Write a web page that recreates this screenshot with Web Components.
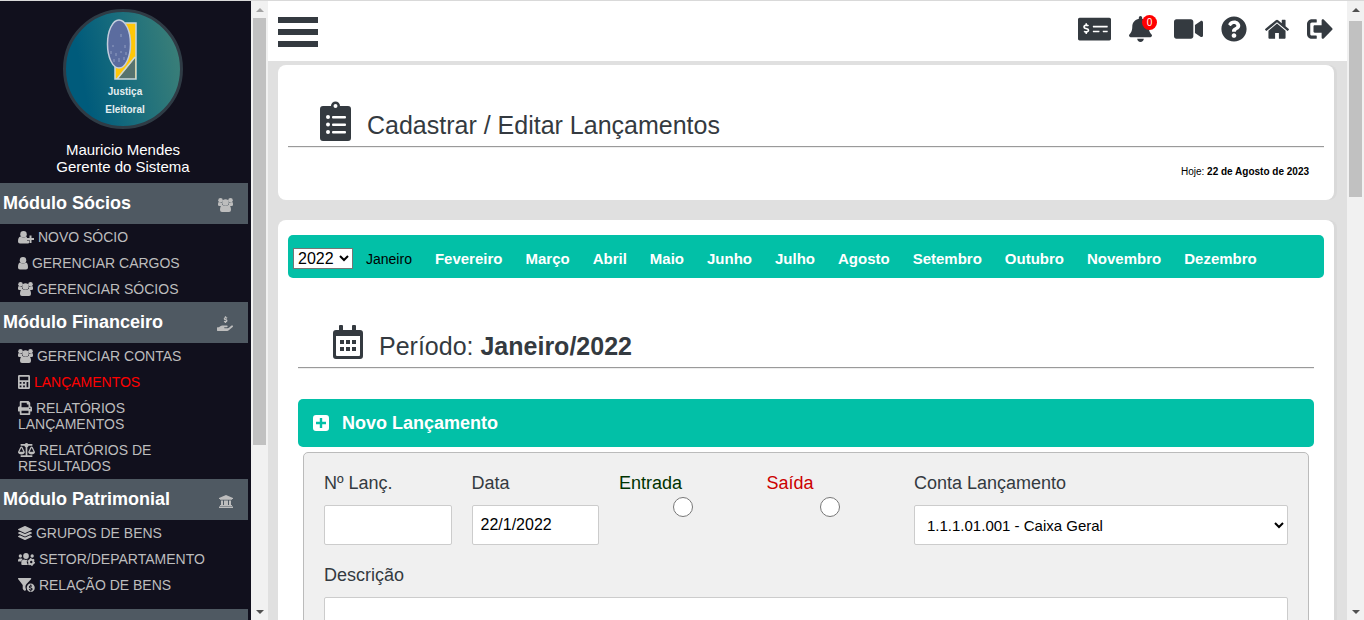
<!DOCTYPE html>
<html lang="pt-BR">
<head>
<meta charset="utf-8">
<meta name="viewport" content="width=device-width, initial-scale=1">
<title>Cadastrar / Editar Lançamentos</title>
<style>
    html, body {
        height: 100%;
        margin: 0;
    }

    body {
        font-family: "Liberation Sans", Arial, sans-serif;
        color: #343a40;
    }
</style>
</head>
<body>
<app-shell>
    <side-bar slot="side">
        <user-profile name="Mauricio Mendes" role-name="Gerente do Sistema"></user-profile>
        <side-module heading="Módulo Sócios" icon="users">
            <side-item icon="user-plus">NOVO SÓCIO</side-item>
            <side-item icon="user">GERENCIAR CARGOS</side-item>
            <side-item icon="users">GERENCIAR SÓCIOS</side-item>
        </side-module>
        <side-module heading="Módulo Financeiro" icon="hand-dollar">
            <side-item icon="users">GERENCIAR CONTAS</side-item>
            <side-item icon="calculator" active>LANÇAMENTOS</side-item>
            <side-item icon="print">RELATÓRIOS LANÇAMENTOS</side-item>
            <side-item icon="balance">RELATÓRIOS DE RESULTADOS</side-item>
        </side-module>
        <side-module heading="Módulo Patrimonial" icon="bank">
            <side-item icon="layers">GRUPOS DE BENS</side-item>
            <side-item icon="users-cog">SETOR/DEPARTAMENTO</side-item>
            <side-item icon="funnel">RELAÇÃO DE BENS</side-item>
        </side-module>
        <side-module class="last" heading=""></side-module>
    </side-bar>

    <top-bar slot="top"></top-bar>

    <content-card>
        <page-title icon="clipboard">Cadastrar / Editar Lançamentos</page-title>
        <today-date date="22 de Agosto de 2023"></today-date>
    </content-card>

    <content-card class="grow">
        <month-bar year="2022" current="Janeiro"></month-bar>
        <period-panel>
            <page-title slot="title" level="2" icon="calendar">Período: <b>Janeiro/2022</b></page-title>
            <entry-form date="22/1/2022"></entry-form>
        </period-panel>
    </content-card>
</app-shell>

<script>
// each icon: [viewBox, width, height, markup]
const ICONS = {
    'users': ['0 0 30 28', 15, 14, `
        <circle cx="5" cy="4.500" r="4.500"/><circle cx="25" cy="4.500" r="4.500"/>
        <path d="M0 15v-3q0-4 2-4 3 2 6 1.500q-.5 5 2.500 6.500H3q-3 0-3-2zM30 15v-3q0-4-2-4-3 2-6 1.500.5 5-2.500 6.500H27q3 0 3-2z"/>
        <circle cx="15" cy="9" r="6.500"/>
        <path d="M4 24q0-9 5-10 6 4 12 0 5 1 5 10 0 4-4 4H8q-4 0-4-4z"/>`],
    'user': ['0 0 20 28', 10, 14, `
        <circle cx="10" cy="8.500" r="6.500"/>
        <path d="M0 23q0-9 4-10 6 4 12 0 4 1 4 10 0 4-4 4H4q-4 0-4-4z"/>`],
    'user-plus': ['0 0 32 28', 16, 14, `
        <circle cx="11" cy="8.500" r="6.500"/>
        <path d="M0 23q0-9 5-10 6 4 12 0l1 2.500V21h4v5q-1 1-4 1H4q-4 0-4-4z"/>
        <path d="M23 11h4v5h5v4h-5v6h-4v-6h-5v-4h5z"/>`],
    'calculator': ['0 0 448 512', 12, 14, `
        <path fill-rule="evenodd" d="M48 0h352q48 0 48 48v416q0 48-48 48H48q-48 0-48-48V48Q0 0 48 0zM64 64v128h320V64zM64 256v64h64v-64zM192 256v64h64v-64zM320 256v192h64V256zM64 384v64h64v-64zM192 384v64h64v-64z"/>`],
    'print': ['0 0 512 512', 14, 14, `
        <path d="M448 192V77.250c0-8.490-3.370-16.620-9.370-22.630L393.370 9.370c-6-6-14.140-9.370-22.630-9.370H96C78.330 0 64 14.330 64 32v160c-35.350 0-64 28.650-64 64v112c0 8.840 7.160 16 16 16h48v96c0 17.670 14.330 32 32 32h320c17.670 0 32-14.330 32-32v-96h48c8.840 0 16-7.160 16-16V256c0-35.350-28.650-64-64-64zm-64 256H128v-96h256v96zm0-224H128V64h192v48c0 8.840 7.160 16 16 16h48v96zm48 72c-13.250 0-24-10.750-24-24 0-13.260 10.750-24 24-24s24 10.740 24 24c0 13.250-10.750 24-24 24z"/>`],
    'balance': ['0 0 640 512', 17, 14, `
        <path d="M256 336h-.02c0-16.180 1.340-8.730-85.050-181.510-17.650-35.290-68.190-35.360-85.870 0C-2.060 328.750.02 320.330.02 336H0c0 44.180 57.310 80 128 80s128-35.820 128-80zM128 176l72 144H56l72-144zm511.980 160c0-16.180 1.340-8.730-85.050-181.510-17.650-35.290-68.190-35.360-85.870 0-87.120 174.260-85.040 165.840-85.040 181.510H384c0 44.180 57.310 80 128 80s128-35.820 128-80h-.02zM440 320l72-144 72 144H440zm88 128H352V153.250c23.510-10.290 41.160-31.480 46.390-57.250H528c8.840 0 16-7.160 16-16V48c0-8.840-7.160-16-16-16H383.640C369.040 12.680 346.090 0 320 0s-49.040 12.680-63.640 32H112c-8.840 0-16 7.160-16 16v32c0 8.840 7.160 16 16 16h129.610c5.230 25.760 22.870 46.960 46.390 57.250V448H112c-8.840 0-16 7.160-16 16v32c0 8.840 7.160 16 16 16h416c8.840 0 16-7.160 16-16v-32c0-8.840-7.160-16-16-16z"/>`],
    'layers': ['0 0 512 512', 14, 14, `
        <path d="M12.410 148.020l232.940 105.670c6.800 3.090 14.490 3.090 21.290 0l232.940-105.670c16.550-7.510 16.550-32.520 0-40.030L266.650 2.310a25.607 25.607 0 0 0-21.290 0L12.410 107.980c-16.550 7.510-16.550 32.530 0 40.040zm487.180 88.280l-58.090-26.330-161.640 73.270c-7.560 3.430-15.590 5.170-23.860 5.170s-16.290-1.740-23.860-5.170L70.510 209.970l-58.100 26.330c-16.550 7.500-16.550 32.500 0 40l232.940 105.590c6.800 3.080 14.490 3.080 21.290 0L499.590 276.300c16.550-7.500 16.550-32.500 0-40zm0 127.800l-57.870-26.230-161.860 73.370c-7.560 3.430-15.590 5.170-23.860 5.170s-16.290-1.740-23.860-5.170L70.290 337.870 12.410 364.100c-16.550 7.500-16.550 32.500 0 40l232.940 105.590c6.800 3.080 14.490 3.080 21.290 0L499.590 404.100c16.550-7.500 16.550-32.500 0-40z"/>`],
    'users-cog': ['0 0 36 28', 17, 14, `
        <circle cx="5" cy="8" r="3.500"/><circle cx="30" cy="8" r="3.500"/><circle cx="17" cy="8" r="6"/>
        <path d="M0 17q0-4 4-4h3q2 0 3 1-3 2-3 5H0zM7 22q0-7 6-7 4 1.500 7 0-3 5 0 9l1 2H9q-2 0-2-2z"/>
        <circle cx="28" cy="20" r="4.500" fill="none" stroke="currentColor" stroke-width="4"/>
        <circle cx="28" cy="20" r="6.500" fill="none" stroke="currentColor" stroke-width="3" stroke-dasharray="3 3.800"/>`],
    'funnel': ['0 0 36 28', 17, 14, `
        <path d="M1.500 0h25q3 0 1 2.500L18 12q-4 4-1 11l-1 2q-1 1-3 0l-2-2q-1-1-1-2v-7L.5 2.500Q-1 0 1.500 0z"/>
        <path fill-rule="evenodd" d="M27 11a8.500 8.500 0 1 1 0 17 8.500 8.500 0 1 1 0-17zM26 13v2q-3 .5-3 3t5 3.500q1 1.500-1 1.500l-3-1-1 2 3 1v2h2v-2q3-.5 3-3t-5-3.500q-1-1.500 1-1.500l2 .7 1-2-2-.8v-2z"/>`],
    'hand-dollar': ['0 0 576 512', 16, 15, `
        <path d="M565.300 328.100c-11.800-10.700-30.200-10-42.600 0L430.300 402c-11.300 9.100-25.400 14-40 14H272c-8.800 0-16-7.200-16-16s7.200-16 16-16h78.300c15.900 0 30.700-10.900 33.300-26.600 3.300-20-12.100-37.400-31.600-37.400H192c-27 0-53.100 9.300-74.100 26.300L71.400 384H16c-8.800 0-16 7.200-16 16v96c0 8.800 7.200 16 16 16h356.800c14.500 0 28.600-4.900 40-14L564 377c15.200-12.100 16.400-35.300 1.300-48.900z"/>
        <path d="M365 75q-30-18-65-14-42 8-32 40 6 16 39 20 48 7 48 36-2 34-48 36-30 0-53-14M306 10v45M306 198v45" fill="none" stroke="currentColor" stroke-width="46"/>`],
    'bank': ['0 0 28 28', 14, 14, `
        <path d="M14 2l14 6v2h-2v1.500H2V10H0V8zM4 13h4v9h2v-9h4v9h0v-9h4v9h2v-9h4v9h2v2H2v-2h2zM0 25h28v3H0z"/>`],
    'money-check': ['0 0 640 512', 33, 26, `
        <path d="M608 32H32C14.330 32 0 46.330 0 64v384c0 17.670 14.330 32 32 32h576c17.670 0 32-14.330 32-32V64c0-17.670-14.330-32-32-32zM176 327.880V344c0 4.420-3.580 8-8 8h-16c-4.420 0-8-3.580-8-8v-16.290c-11.290-.58-22.270-4.520-31.370-11.350-3.900-2.930-4.100-8.770-.57-12.140l11.750-11.210c2.770-2.640 6.890-2.760 10.130-.73 3.870 2.420 8.260 3.720 12.820 3.720h28.110c6.500 0 11.800-5.920 11.800-13.190 0-5.950-3.610-11.190-8.770-12.730l-45-13.500c-18.590-5.580-31.580-23.420-31.580-43.390 0-24.520 19.050-44.440 42.670-45.070V152c0-4.420 3.580-8 8-8h16c4.420 0 8 3.580 8 8v16.290c11.290.58 22.270 4.510 31.370 11.350 3.900 2.930 4.100 8.770.57 12.140l-11.750 11.210c-2.770 2.640-6.890 2.760-10.130.73-3.870-2.430-8.260-3.720-12.820-3.720h-28.110c-6.500 0-11.800 5.920-11.800 13.190 0 5.950 3.610 11.190 8.770 12.730l45 13.500c18.590 5.580 31.580 23.420 31.580 43.390 0 24.530-19.050 44.440-42.670 45.070zM416 312c0 4.420-3.580 8-8 8H296c-4.420 0-8-3.580-8-8v-16c0-4.420 3.580-8 8-8h112c4.420 0 8 3.580 8 8v16zm160 0c0 4.420-3.580 8-8 8h-80c-4.420 0-8-3.580-8-8v-16c0-4.420 3.580-8 8-8h80c4.420 0 8 3.580 8 8v16zm0-96c0 4.420-3.580 8-8 8H296c-4.420 0-8-3.580-8-8v-16c0-4.420 3.580-8 8-8h272c4.420 0 8 3.580 8 8v16z"/>`],
    'bell': ['0 0 448 512', 23, 26, `
        <path d="M224 512c35.320 0 63.970-28.650 63.970-64H160.030c0 35.350 28.650 64 63.970 64zm215.390-149.710c-19.320-20.760-55.470-51.990-55.470-154.290 0-77.700-54.480-139.900-127.940-155.160V32c0-17.670-14.320-32-31.980-32s-31.980 14.330-31.980 32v20.840C118.560 68.100 64.080 130.300 64.080 208c0 102.300-36.150 133.530-55.470 154.290-6 6.450-8.660 14.160-8.610 21.710.11 16.400 12.980 32 32.100 32h383.800c19.120 0 32-15.600 32.100-32 .05-7.550-2.610-15.270-8.610-21.710z"/>`],
    'video': ['0 0 576 512', 29, 26, `
        <path d="M336.200 64H47.800C21.400 64 0 85.400 0 111.800v288.400C0 426.600 21.400 448 47.800 448h288.400c26.400 0 47.800-21.400 47.800-47.800V111.800c0-26.400-21.400-47.800-47.800-47.800zm189.400 37.700L416 177.300v157.400l109.600 75.500c21.200 14.600 50.400-.3 50.400-25.800V127.500c0-25.400-29.100-40.400-50.400-25.800z"/>`],
    'question': ['0 0 512 512', 26, 26, `
        <path d="M504 256c0 136.997-111.043 248-248 248S8 392.997 8 256C8 119.083 119.043 8 256 8s248 111.083 248 248zM262.655 90c-54.497 0-89.255 22.957-116.549 63.758-3.536 5.286-2.353 12.415 2.715 16.258l34.699 26.310c5.205 3.947 12.621 3.008 16.665-2.122 17.864-22.658 30.113-35.797 57.303-35.797 20.429 0 45.698 13.148 45.698 32.958 0 14.976-12.363 22.667-32.534 33.976C247.128 238.528 216 254.941 216 296v4c0 6.627 5.373 12 12 12h56c6.627 0 12-5.373 12-12v-1.333c0-28.462 83.186-29.647 83.186-106.667 0-58.002-60.165-102-116.531-102zM256 338c-25.365 0-46 20.635-46 46 0 25.364 20.635 46 46 46s46-20.636 46-46c0-25.364-20.635-46-46-46z"/>`],
    'home': ['88 0 1616 1750', 24, 26, `
        <path d="M1472 992v480q0 26-19 45t-45 19h-384v-384h-256v384h-384q-26 0-45-19t-19-45v-480q0-1 .5-3t.5-3l575-474 575 474q1 2 1 6zm223-69l-62 74q-8 9-21 11h-3q-13 0-21-7l-692-577-692 577q-12 8-24 7-13-2-21-11l-62-74q-8-10-7-23.500t11-21.500l719-599q32-26 76-26t76 26l244 204v-195q0-14 9-23t23-9h192q14 0 23 9t9 23v408l219 182q10 8 11 21.500t-7 23.500z"/>`],
    'sign-out': ['0 0 512 512', 26, 26, `
        <path d="M497 273L329 441c-15 15-41 4.500-41-17v-96H152c-13.300 0-24-10.700-24-24v-96c0-13.300 10.700-24 24-24h136V88c0-21.400 25.900-32 41-17l168 168c9.300 9.400 9.300 24.600 0 34zM192 436v-40c0-6.600-5.400-12-12-12H96c-17.700 0-32-14.300-32-32V160c0-17.700 14.300-32 32-32h84c6.600 0 12-5.400 12-12V76c0-6.600-5.400-12-12-12H96c-53 0-96 43-96 96v192c0 53 43 96 96 96h84c6.600 0 12-5.400 12-12z"/>`],
    'clipboard': ['0 0 31 40', 31, 40, `
        <path fill-rule="evenodd" d="M3 5h8a4.500 4.500 0 0 1 9 0h8q3 0 3 3v29q0 3-3 3H3q-3 0-3-3V8q0-3 3-3zM15.500 3a2 2 0 1 0 0 4 2 2 0 1 0 0-4z"/>
        <g fill="#fff"><circle cx="8" cy="16" r="2"/><circle cx="8" cy="23.500" r="2"/><circle cx="8" cy="31" r="2"/>
        <rect x="12" y="15" width="14" height="2.500" rx="1"/><rect x="12" y="22.500" width="14" height="2.500" rx="1"/><rect x="12" y="30" width="14" height="2.500" rx="1"/></g>`],
    'calendar': ['0 0 30 37', 30, 37, `
        <path fill-rule="evenodd" d="M3 5h3V1q0-1 1-1h2q1 0 1 1v4h9V1q0-1 1-1h2q1 0 1 1v4h4q3 0 3 3v23q0 3-3 3H3q-3 0-3-3V8q0-3 3-3zM3 11v19q0 1 1 1h22q1 0 1-1V11z"/>
        <path d="M7 15h4v4H7zM13 15h4v4h-4zM19 15h4v4h-4zM7 22h4v4H7zM13 22h4v4h-4zM19 22h4v4h-4z"/>`],
    'plus-square': ['0 0 16 16', 16, 16, `
        <path fill-rule="evenodd" d="M3 0h10Q16 0 16 3v10q0 3-3 3H3Q0 16 0 13V3Q0 0 3 0zM6.800 3v3.800H3v2.400h3.800V13h2.400V9.200H13V6.800H9.200V3z"/>`]
};

const MONTHS = ['Janeiro', 'Fevereiro', 'Março', 'Abril', 'Maio', 'Junho',
    'Julho', 'Agosto', 'Setembro', 'Outubro', 'Novembro', 'Dezembro'];

class BaseElement extends HTMLElement {
    constructor() {
        super();
        this.attachShadow({ mode: 'open' });
    }

    connectedCallback() {
        this.shadowRoot.innerHTML = this.template();
    }
}

class AppIcon extends BaseElement {
    template() {
        const [box, width, height, shapes] = ICONS[this.getAttribute('name')];
        return `
            <style>
                :host { display: inline-block; flex: none; line-height: 0; }
                svg { display: block; }
            </style>
            <svg viewBox="${box}" width="${width}" height="${height}" fill="currentColor" preserveAspectRatio="none" aria-hidden="true">${shapes}</svg>
        `;
    }
}

class ScrollRail extends BaseElement {
    template() {
        return `
            <style>
                :host {
                    display: flex;
                    flex-direction: column;
                    flex: none;
                    width: 17px;
                    background: #f1f1f1;
                }
                .end {
                    display: grid;
                    place-items: center;
                    height: 17px;
                    color: #505050;
                }
                :host([at-top]) .up { color: #a3a3a3; }
                .track { flex: 1; padding: 0 2px; }
                .thumb {
                    height: var(--thumb, 50%);
                    margin-top: var(--thumb-top, 0);
                    background: #c1c1c1;
                }
                svg { display: block; }
            </style>
            <div class="end up"><svg width="8" height="4"><path d="M4 0l4 4H0z" fill="currentColor"/></svg></div>
            <div class="track"><div class="thumb"></div></div>
            <div class="end"><svg width="8" height="4"><path d="M0 0h8L4 4z" fill="currentColor"/></svg></div>
        `;
    }
}

class AppShell extends BaseElement {
    template() {
        return `
            <style>
                :host {
                    display: flex;
                    box-sizing: border-box;
                    height: 100vh;
                    overflow: hidden;
                    border-top: 1px solid #d9d9d9;
                    background: #e0e0e0;
                }
                .side-rail { --thumb: 73%; }
                .page-rail { --thumb: 30%; --thumb-top: 3px; }
                .page {
                    display: flex;
                    flex-direction: column;
                    flex: 1;
                    min-width: 0;
                }
                main {
                    display: flex;
                    flex-direction: column;
                    gap: 20px;
                    flex: 1;
                    min-height: 0;
                    padding: 4px 13px 0 10px;
                    overflow: hidden auto;
                    scrollbar-width: none;
                }
            </style>
            <slot name="side"></slot>
            <scroll-rail class="side-rail" at-top></scroll-rail>
            <div class="page">
                <slot name="top"></slot>
                <main><slot></slot></main>
            </div>
            <scroll-rail class="page-rail"></scroll-rail>
        `;
    }
}

class SideBar extends BaseElement {
    template() {
        return `
            <style>
                :host {
                    display: block;
                    box-sizing: border-box;
                    flex: none;
                    width: 251px;
                    padding-right: 3px;
                    overflow: hidden auto;
                    scrollbar-width: none;
                    background: #11101d;
                }
                ::slotted(.last) { margin-top: 11px; }
            </style>
            <nav><slot></slot></nav>
        `;
    }
}

class UserProfile extends BaseElement {
    template() {
        return `
            <style>
                :host {
                    display: flex;
                    flex-direction: column;
                    align-items: center;
                    padding: 8px 2px 8px 0;
                    color: #fff;
                    font-size: 15px;
                    line-height: 17px;
                    text-align: center;
                }
                svg { display: block; margin-bottom: 12px; }
                text {
                    font-family: "Liberation Sans Narrow", "Liberation Sans", sans-serif;
                    font-size: 10px;
                    font-weight: bold;
                    fill: #e4eef0;
                    text-anchor: middle;
                }
            </style>
            <svg width="120" height="120" viewBox="0 0 120 120" role="img" aria-label="Justiça Eleitoral">
                <defs>
                    <linearGradient id="sea" x1="0" y1="0.600" x2="1" y2="0.400">
                        <stop offset="0.150" stop-color="#005b7b"/>
                        <stop offset="0.500" stop-color="#176c7d"/>
                        <stop offset="1" stop-color="#3b7f78"/>
                    </linearGradient>
                </defs>
                <circle cx="60" cy="60" r="58.500" fill="url(#sea)" stroke="#2f3b45" stroke-width="3"/>
                <path d="M52 14h21v56H52z" fill="#ffc708"/>
                <path d="M72 49v21H55z" fill="#56736f"/>
                <path d="M52 14h21v56H52zM54 70l18-22" fill="none" stroke="#c9d8dc" stroke-width="1.500"/>
                <ellipse cx="56" cy="35" rx="11.500" ry="24" fill="#5b6c9f" stroke="#c3cddd" stroke-width="1.500"/>
                <path d="M58 25v3M50 36v2M62 36v3M48 42v3M53 44v3M58 42v2M63 43v3M51 50v3M56 49v4M61 48v3" stroke="#a9b5d2" stroke-opacity="0.700"/>
                <text x="62" y="86">Justiça</text>
                <text x="62" y="104">Eleitoral</text>
            </svg>
            <span>${this.getAttribute('name')}</span>
            <span>${this.getAttribute('role-name')}</span>
        `;
    }
}

class SideModule extends BaseElement {
    template() {
        const icon = this.getAttribute('icon');
        return `
            <style>
                :host { display: block; }
                .head {
                    display: flex;
                    justify-content: space-between;
                    align-items: flex-end;
                    min-height: 21px;
                    padding: 10px 15px 10px 3px;
                    background: #4f5962;
                    color: #bdbdbd;
                }
                h2 {
                    margin: 0;
                    color: #fff;
                    font-size: 18px;
                    line-height: 21px;
                }
                app-icon { margin-bottom: 2px; }
            </style>
            <div class="head">
                <h2>${this.getAttribute('heading')}</h2>
                ${icon ? `<app-icon name="${icon}"></app-icon>` : ''}
            </div>
            <slot></slot>
        `;
    }
}

class SideItem extends BaseElement {
    template() {
        return `
            <style>
                :host {
                    display: block;
                    padding: 5px 36px 5px 18px;
                    font-size: 14px;
                    line-height: 16px;
                    color: #bdbdbd;
                }
                a { color: inherit; text-decoration: none; }
                app-icon { vertical-align: -2px; }
                :host([active]) span { color: #f00; }
            </style>
            <a href="#"><app-icon name="${this.getAttribute('icon')}"></app-icon> <span><slot></slot></span></a>
        `;
    }
}

class TopBar extends BaseElement {
    template() {
        return `
            <style>
                :host {
                    display: flex;
                    justify-content: space-between;
                    align-items: center;
                    box-sizing: border-box;
                    flex: none;
                    height: 60px;
                    padding: 2px 14px 0 10px;
                    background: #fff;
                }
                button {
                    display: block;
                    padding: 0;
                    border: 0;
                    background: none;
                    cursor: pointer;
                }
                .menu {
                    display: grid;
                    gap: 6px;
                    width: 40px;
                }
                .menu i { height: 6px; background: #343a40; }
                .actions {
                    display: flex;
                    gap: 18px;
                    align-self: flex-start;
                    padding-top: 13px;
                }
                a { display: block; height: 26px; color: #343a40; }
                .alerts { position: relative; width: 27px; }
                .badge {
                    position: absolute;
                    top: -1px;
                    right: -1px;
                    width: 15px;
                    border-radius: 50%;
                    background: #f00;
                    color: #fff;
                    font-size: 10px;
                    line-height: 15px;
                    text-align: center;
                }
            </style>
            <button class="menu" aria-label="Menu"><i></i><i></i><i></i></button>
            <div class="actions">
                <a href="#"><app-icon name="money-check"></app-icon></a>
                <a href="#" class="alerts"><app-icon name="bell"></app-icon><span class="badge">0</span></a>
                <a href="#"><app-icon name="video"></app-icon></a>
                <a href="#"><app-icon name="question"></app-icon></a>
                <a href="#"><app-icon name="home"></app-icon></a>
                <a href="#"><app-icon name="sign-out"></app-icon></a>
            </div>
        `;
    }
}

class ContentCard extends BaseElement {
    template() {
        return `
            <style>
                :host {
                    display: block;
                    flex: none;
                    padding: 10px 10px 22px;
                    border-radius: 8px;
                    background: #fff;
                    box-shadow: 3px 0 0 #d9d9d9;
                }
                :host(.grow) { padding-top: 15px; }
            </style>
            <slot></slot>
        `;
    }
}

class PageTitle extends BaseElement {
    template() {
        const tag = this.getAttribute('level') === '2' ? 'h2' : 'h1';
        return `
            <style>
                :host { display: block; }
                .row {
                    display: flex;
                    align-items: flex-end;
                    gap: 16px;
                    padding: 26px 32px 5px;
                }
                :host([level="2"]) .row { padding-left: 35px; }
                h1, h2 {
                    margin: 0;
                    font-size: 25px;
                    font-weight: normal;
                    line-height: 32px;
                }
                hr {
                    margin: 0;
                    border: 0;
                    border-top: 1px solid #9a9a9a;
                    border-bottom: 1px solid #eee;
                }
            </style>
            <div class="row">
                <app-icon name="${this.getAttribute('icon')}"></app-icon>
                <${tag}><slot></slot></${tag}>
            </div>
            <hr>
        `;
    }
}

class TodayDate extends BaseElement {
    template() {
        return `
            <style>
                :host {
                    display: block;
                    padding: 18px 15px 0;
                    color: #000;
                    font-size: 10px;
                    line-height: 12px;
                    text-align: right;
                }
            </style>
            Hoje: <b>${this.getAttribute('date')}</b>
        `;
    }
}

class MonthBar extends BaseElement {
    template() {
        const current = this.getAttribute('current');
        return `
            <style>
                :host {
                    display: flex;
                    align-items: center;
                    gap: 13px;
                    box-sizing: border-box;
                    min-height: 43px;
                    padding: 3px 5px 0;
                    border-radius: 5px;
                    background: #02c0a7;
                }
                select {
                    height: 21px;
                    width: 60px;
                    padding: 0;
                    border: 1px solid #767676;
                    border-radius: 0;
                    background: #fff;
                    color: #000;
                    font: 16px "Liberation Sans", Arial, sans-serif;
                }
                nav { display: flex; align-items: baseline; gap: 23px; padding-top: 2px; }
                a {
                    color: #fff;
                    font-size: 15px;
                    font-weight: bold;
                    line-height: 18px;
                    text-decoration: none;
                }
                a.current { color: #000; font-size: 14px; font-weight: normal; }
            </style>
            <select aria-label="Ano"><option>${this.getAttribute('year')}</option></select>
            <nav>
                ${MONTHS.map(month => `<a href="#" class="${month === current ? 'current' : ''}">${month}</a>`).join('')}
            </nav>
        `;
    }
}

class PeriodPanel extends BaseElement {
    template() {
        return `
            <style>
                :host { display: block; padding: 21px 10px 0; }
                .bar {
                    display: flex;
                    align-items: center;
                    gap: 13px;
                    min-height: 48px;
                    margin: 30px 0 5px;
                    padding: 0 15px;
                    border-radius: 5px;
                    background: #02c0a7;
                    color: #fff;
                }
                h3 { margin: 0; font-size: 18px; line-height: 22px; }
            </style>
            <slot name="title"></slot>
            <div class="bar">
                <app-icon name="plus-square"></app-icon>
                <h3>Novo Lançamento</h3>
            </div>
            <slot></slot>
        `;
    }
}

class EntryForm extends BaseElement {
    template() {
        return `
            <style>
                :host {
                    display: block;
                    margin: 0 5px;
                    padding: 20px;
                    border: 1px solid #bbb;
                    border-radius: 5px;
                    background: #f0f0f0;
                }
                form {
                    display: grid;
                    grid-template-columns: repeat(4, minmax(0, 15fr)) minmax(0, 44fr);
                    gap: 20px;
                }
                .field { display: grid; gap: 12px; align-content: start; }
                .option { gap: 4px; }
                .wide { grid-column: 1 / -1; }
                label { font-size: 18px; line-height: 20px; }
                .in { color: #003300; }
                .out { color: #c00; }
                input[type="text"], select {
                    box-sizing: border-box;
                    width: 100%;
                    height: 40px;
                    padding: 0 8px;
                    border: 1px solid #ccc;
                    border-radius: 2px;
                    background: #fff;
                    color: #000;
                    font: 16px "Liberation Sans", Arial, sans-serif;
                }
                select { padding-right: 0; font-size: 15px; }
                input[type="radio"] {
                    width: 20px;
                    height: 20px;
                    margin: 0;
                    justify-self: center;
                }
            </style>
            <form>
                <div class="field">
                    <label for="number">Nº Lanç.</label>
                    <input type="text" id="number">
                </div>
                <div class="field">
                    <label for="date">Data</label>
                    <input type="text" id="date" value="${this.getAttribute('date')}">
                </div>
                <div class="field option">
                    <label class="in" for="in">Entrada</label>
                    <input type="radio" name="kind" id="in">
                </div>
                <div class="field option">
                    <label class="out" for="out">Saída</label>
                    <input type="radio" name="kind" id="out">
                </div>
                <div class="field">
                    <label for="account">Conta Lançamento</label>
                    <select id="account"><option>1.1.1.01.001 - Caixa Geral</option></select>
                </div>
                <div class="field wide">
                    <label for="description">Descrição</label>
                    <input type="text" id="description">
                </div>
            </form>
        `;
    }
}

customElements.define('app-icon', AppIcon);
customElements.define('scroll-rail', ScrollRail);
customElements.define('app-shell', AppShell);
customElements.define('side-bar', SideBar);
customElements.define('user-profile', UserProfile);
customElements.define('side-module', SideModule);
customElements.define('side-item', SideItem);
customElements.define('top-bar', TopBar);
customElements.define('content-card', ContentCard);
customElements.define('page-title', PageTitle);
customElements.define('today-date', TodayDate);
customElements.define('month-bar', MonthBar);
customElements.define('period-panel', PeriodPanel);
customElements.define('entry-form', EntryForm);
</script>
</body>
</html>
